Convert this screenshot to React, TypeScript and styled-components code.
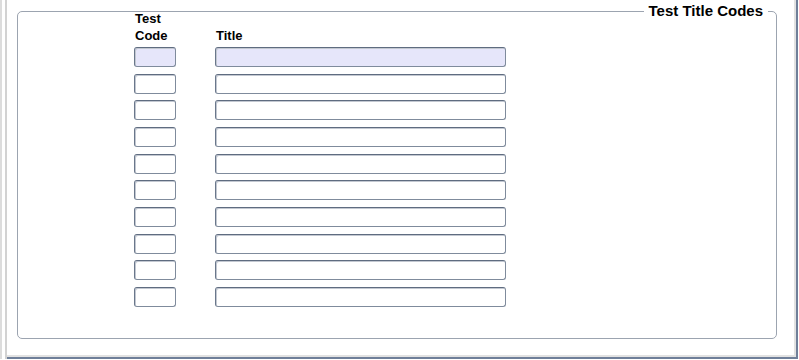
import React from "react";
import styled, { createGlobalStyle } from "styled-components";

const GlobalStyle = createGlobalStyle`
  html, body {
    margin: 0;
    padding: 0;
    background: #ffffff;
  }
  body {
    font-family: "Liberation Sans", Arial, sans-serif;
  }
`;

const Window = styled.div`
  width: 799px;
  height: 360px;
  box-sizing: border-box;
  display: flex;
  padding: 0 1px 1px 0;
  background: #ffffff;
  overflow: hidden;
`;

const LeftRail = styled.div`
  width: 7px;
  box-sizing: border-box;
  border-left: 2px solid #dcdcdc;
  border-right: 2px solid #d2d2d2;
  margin-right: 0;
`;

const Panel = styled.div`
  flex: 1;
  display: flex;
  flex-direction: column;
  box-sizing: border-box;
  padding: 11px 19px 18px 10px;
  border-right: 2px solid #6f7f99;
  border-bottom: 2px solid #6f7f99;
  box-shadow: inset -2px -2px 0 #e2e2e2;
`;

const GroupBox = styled.div`
  position: relative;
  flex: 1;
  border: 1px solid #9ca4b0;
  border-radius: 5px;
  padding: 0 0 0 116px;
`;

const Legend = styled.div`
  position: absolute;
  top: -10px;
  right: 8px;
  padding: 0 5px;
  background: #ffffff;
  font-size: 15px;
  line-height: 18px;
  font-weight: bold;
  color: #000000;
`;

const Grid = styled.div`
  display: grid;
  grid-template-columns: 42px 291px;
  column-gap: 39px;
  row-gap: 6.67px;
  margin-top: -2px;
`;

const HeaderCell = styled.div`
  font-size: 13px;
  line-height: 17px;
  font-weight: bold;
  color: #000000;
  padding-left: 1px;
  margin-bottom: -3.67px;
  display: flex;
  align-items: flex-end;
  white-space: pre-line;
`;

const Field = styled.input<{ $active?: boolean }>`
  box-sizing: border-box;
  height: 20px;
  width: 100%;
  margin: 0;
  padding: 0 3px;
  border: 1px solid #7f8b9c;
  border-top-color: #5f6c80;
  border-left-color: #6a778b;
  border-radius: 3px;
  box-shadow: inset 1px 1px 0 #c3c8d1;
  background: ${p => (p.$active ? "#e6e6fa" : "#ffffff")};
  font-family: "Liberation Sans", Arial, sans-serif;
  font-size: 12px;
  outline: none;
`;

const rows = Array.from({ length: 10 }, (_, i) => i);

export default function App() {
  return (
    <>
      <GlobalStyle />
      <Window>
        <LeftRail />
        <Panel>
          <GroupBox>
            <Legend>Test Title Codes</Legend>
            <Grid>
              <HeaderCell>{"Test\nCode"}</HeaderCell>
              <HeaderCell>Title</HeaderCell>
              {rows.map(i => (
                <React.Fragment key={i}>
                  <Field $active={i === 0} />
                  <Field $active={i === 0} />
                </React.Fragment>
              ))}
            </Grid>
          </GroupBox>
        </Panel>
      </Window>
    </>
  );
}
